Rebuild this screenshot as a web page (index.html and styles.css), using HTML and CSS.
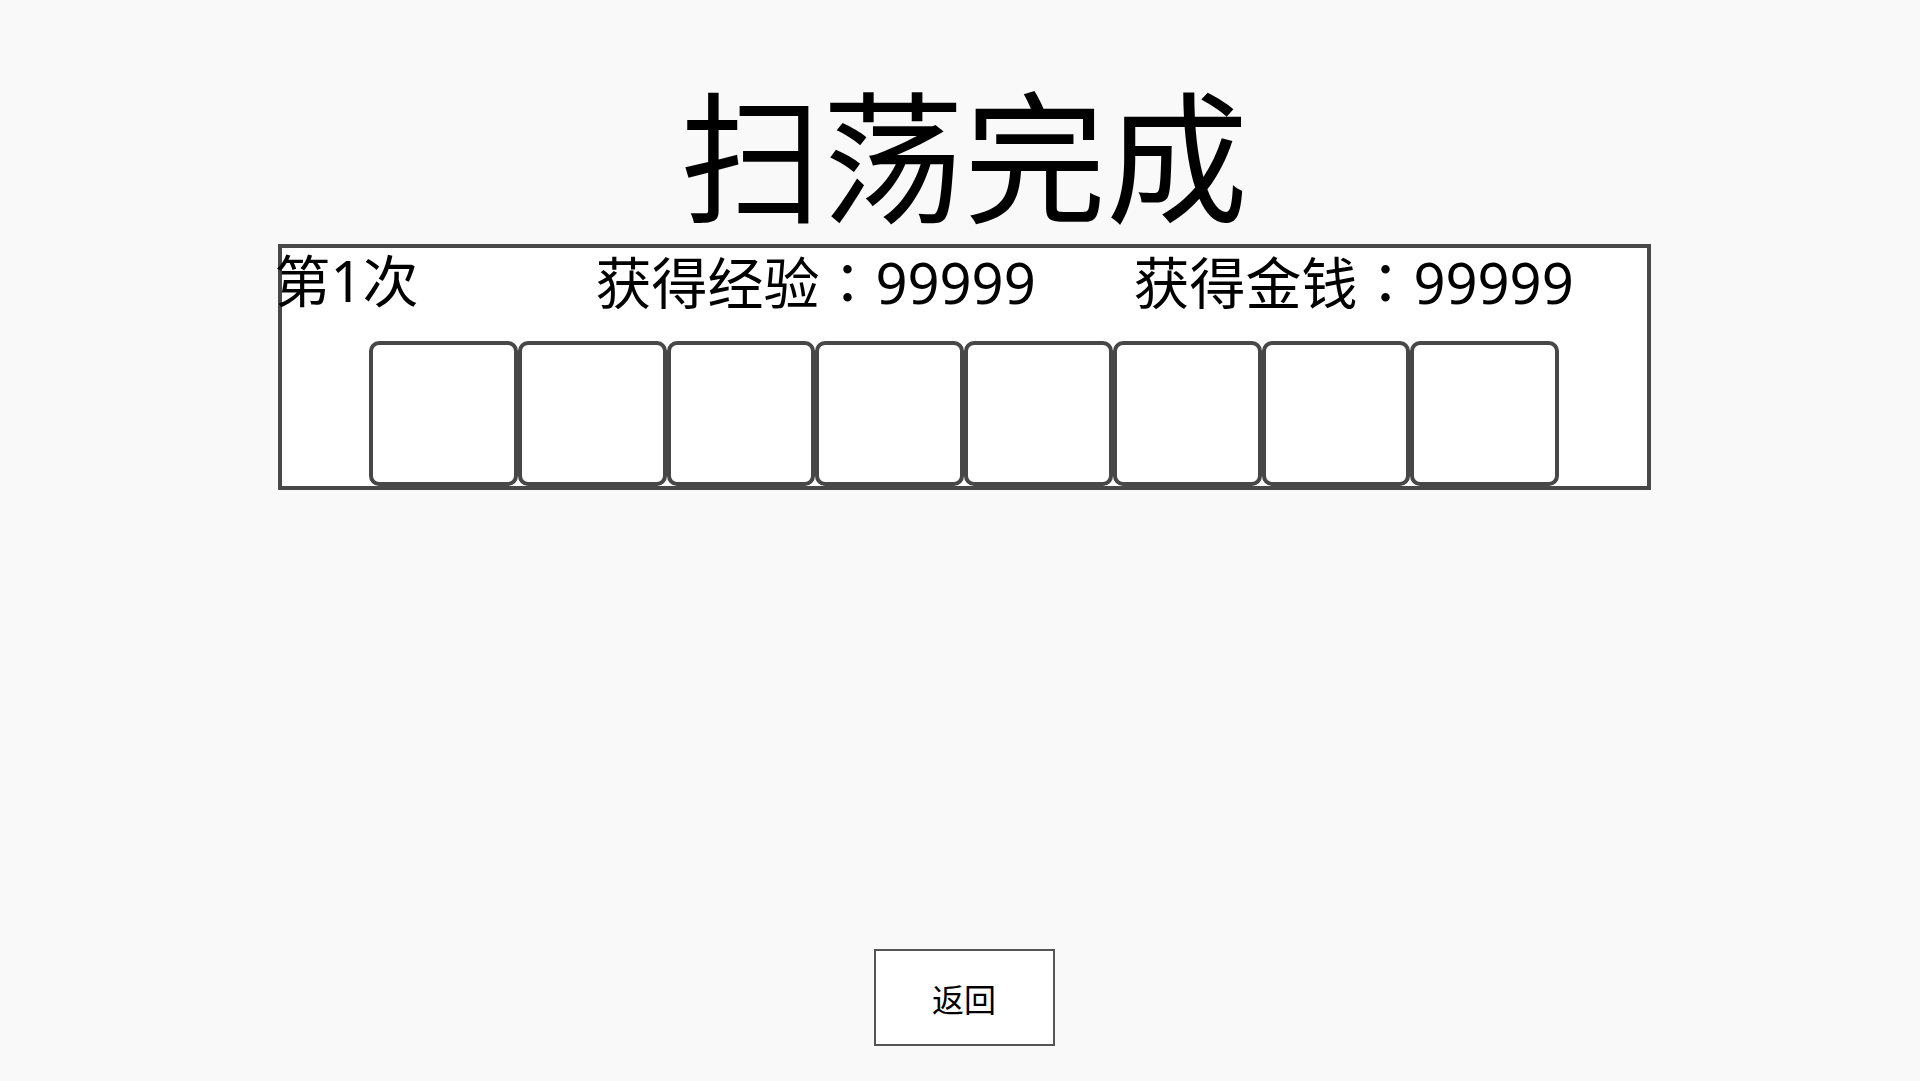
FILE: index.html
```html
<!DOCTYPE html>
<html lang="zh-CN">
<head>
<meta charset="utf-8">
<title>扫荡完成</title>
<link rel="stylesheet" href="styles.css">
</head>
<body>
<div class="page">
  <h1 class="title">扫荡完成</h1>
  <section class="result">
    <div class="result-row">
      <span class="col-round">第1次</span>
      <span class="col-exp">获得经验<span class="colon" lang="zh-TW">：</span>99999</span>
      <span class="col-gold">获得金钱<span class="colon" lang="zh-TW">：</span>99999</span>
    </div>
    <div class="slots">
      <div class="slot"></div>
      <div class="slot"></div>
      <div class="slot"></div>
      <div class="slot"></div>
      <div class="slot"></div>
      <div class="slot"></div>
      <div class="slot"></div>
      <div class="slot"></div>
    </div>
  </section>
  <div class="actions">
    <button class="back-btn" type="button">返回</button>
  </div>
</div>
</body>
</html>
```

FILE: styles.css
```css
html, body {
  margin: 0;
  padding: 0;
  background: #f9f9f9;
}

body {
  font-family: "Noto Sans", "Noto Sans CJK SC", sans-serif;
  color: #000;
}

.page {
  padding-left: 8px;
  padding-top: 79px;
  display: flex;
  flex-direction: column;
  align-items: center;
}

.title {
  margin: 0;
  font-family: "Noto Sans CJK SC", sans-serif;
  font-weight: 400;
  font-size: 142px;
  line-height: 142px;
  height: 142px;
  letter-spacing: 0;
}

.result {
  margin-top: 23px;
  box-sizing: border-box;
  width: 1373px;
  height: 246px;
  border: 4px solid #484848;
  background: #fff;
  display: flex;
  flex-direction: column;
}

.result-row {
  display: grid;
  grid-template-columns: 321px 538px auto;
  margin-left: -7px;
  padding-top: 4px;
  font-size: 56px;
  line-height: 56px;
  height: 56px;
  white-space: nowrap;
}

.colon {
  font-family: "Noto Sans CJK TC", "Noto Sans CJK JP", sans-serif;
}

.slots {
  margin-top: auto;
  align-self: center;
  display: flex;
  width: 1190px;
}

.slot {
  flex: 1 1 0;
  box-sizing: border-box;
  height: 145px;
  border: 4px solid #474747;
  border-radius: 10px;
  background: #fff;
}

.actions {
  margin-top: 459px;
}

.back-btn {
  box-sizing: border-box;
  width: 181px;
  height: 97px;
  border: 2px solid #555;
  border-radius: 0;
  background: #fff;
  font-family: "Noto Sans CJK SC", sans-serif;
  font-size: 32px;
  color: #000;
  padding: 0;
}
```
